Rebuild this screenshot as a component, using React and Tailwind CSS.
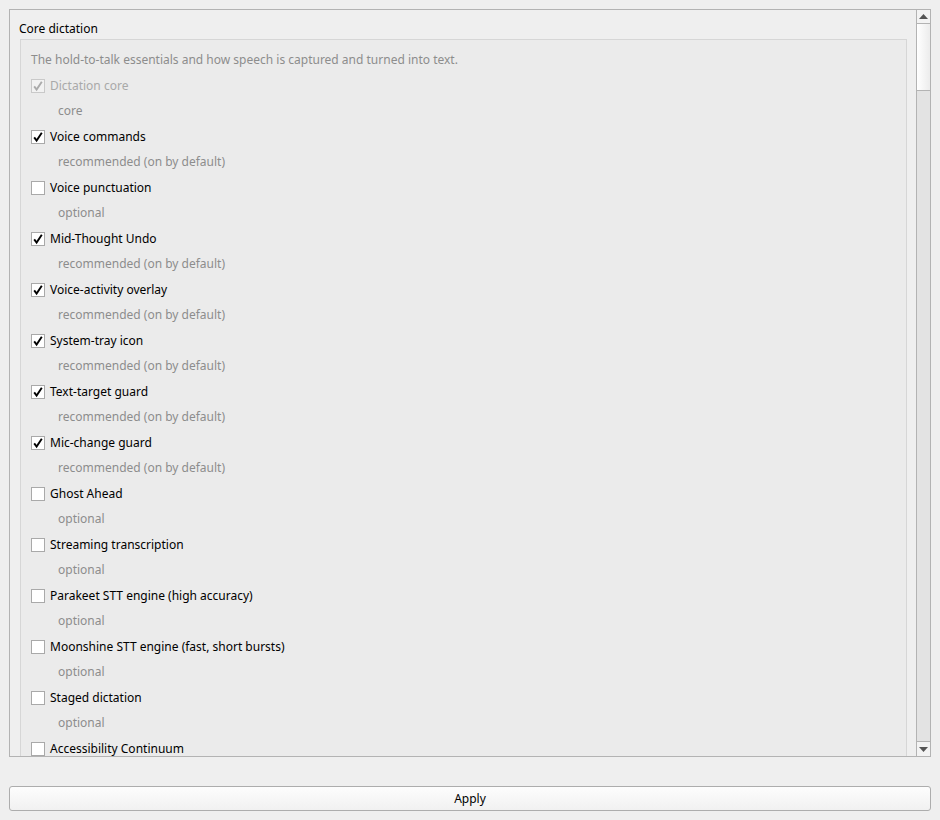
import { useState } from 'react';

const features = [
    { name: 'Dictation core', tier: 'core', checked: true, locked: true },
    { name: 'Voice commands', tier: 'recommended (on by default)', checked: true },
    { name: 'Voice punctuation', tier: 'optional', checked: false },
    { name: 'Mid-Thought Undo', tier: 'recommended (on by default)', checked: true },
    { name: 'Voice-activity overlay', tier: 'recommended (on by default)', checked: true },
    { name: 'System-tray icon', tier: 'recommended (on by default)', checked: true },
    { name: 'Text-target guard', tier: 'recommended (on by default)', checked: true },
    { name: 'Mic-change guard', tier: 'recommended (on by default)', checked: true },
    { name: 'Ghost Ahead', tier: 'optional', checked: false },
    { name: 'Streaming transcription', tier: 'optional', checked: false },
    { name: 'Parakeet STT engine (high accuracy)', tier: 'optional', checked: false },
    { name: 'Moonshine STT engine (fast, short bursts)', tier: 'optional', checked: false },
    { name: 'Staged dictation', tier: 'optional', checked: false },
    { name: 'Accessibility Continuum', tier: 'optional', checked: false },
];

const CheckBox = ({ checked, disabled }) => (
    <div
        className={`w-[14px] h-[14px] border flex items-center justify-center shrink-0 ${
            disabled ? 'border-[#c9c9c9] bg-[#f2f2f2]' : 'border-[#a9a9a9] bg-white'
        }`}
    >
        {checked && (
            <svg width="12" height="12" viewBox="0 0 12 12">
                <path
                    d="M2.2 6.4 L4.6 9.6 L9.8 1.8"
                    fill="none"
                    stroke={disabled ? '#ababab' : '#000'}
                    strokeWidth="1.9"
                    strokeLinejoin="miter"
                />
            </svg>
        )}
    </div>
);

const Arrow = ({ up }) => (
    <svg width="9" height="5" viewBox="0 0 9 5">
        <path d={up ? 'M0 5 L4.5 0 L9 5 Z' : 'M0 0 L9 0 L4.5 5 Z'} fill="#555" />
    </svg>
);

const App = () => {
    const [items, setItems] = useState(features);

    const toggle = (idx) => {
        setItems((prev) =>
            prev.map((it, i) => (i === idx && !it.locked ? { ...it, checked: !it.checked } : it))
        );
    };

    return (
        <div className="w-[940px] h-[820px] bg-[#efefef] pt-[9px] pl-[9px] text-[12px] text-black font-['Noto_Sans',sans-serif] overflow-hidden">
            {/* Scroll area */}
            <div className="w-[922px] h-[748px] border border-[#b3b3b3] flex">
                <div className="flex-1 overflow-hidden">
                    <div className="pt-[10px] pl-[9px] leading-[18px] h-[29px]">Core dictation</div>
                    {/* Group box */}
                    <div className="ml-[10px] mr-[9px] border border-[#d6d6d6] bg-[#ebebeb] pt-[7px] pl-[10px] h-[760px]">
                        <div className="h-[26px] flex items-center text-[#8d8d8d]">
                            The hold-to-talk essentials and how speech is captured and turned into text.
                        </div>
                        {items.map((it, i) => (
                            <div key={it.name} className="h-[51px]">
                                <div
                                    className="h-[24px] pt-[2px] flex items-center gap-[5px] cursor-default"
                                    onClick={() => toggle(i)}
                                >
                                    <CheckBox checked={it.checked} disabled={it.locked} />
                                    <span className={it.locked ? 'text-[#a9a9a9]' : 'text-black'}>{it.name}</span>
                                </div>
                                <div className="h-[27px] flex items-center pl-[27px] text-[#8d8d8d]">{it.tier}</div>
                            </div>
                        ))}
                    </div>
                </div>

                {/* Scrollbar */}
                <div className="w-[14px] border-l border-[#b3b3b3] flex flex-col bg-[#e3e3e3]">
                    <div className="h-[14px] border-b border-[#b3b3b3] bg-[#f3f3f3] flex items-center justify-center">
                        <Arrow up />
                    </div>
                    <div className="h-[67px] border-b border-[#b3b3b3] bg-gradient-to-r from-white to-[#ececec]" />
                    <div className="flex-1" />
                    <div className="h-[15px] border-t border-[#b3b3b3] bg-[#f3f3f3] flex items-center justify-center">
                        <Arrow />
                    </div>
                </div>
            </div>

            {/* Apply */}
            <button className="mt-[29px] w-[922px] h-[25px] border border-[#adadad] rounded-[3px] bg-gradient-to-b from-[#fdfdfd] to-[#f1f1f1] text-[12px] text-black flex items-center justify-center">
                Apply
            </button>
        </div>
    );
};

export default App;
